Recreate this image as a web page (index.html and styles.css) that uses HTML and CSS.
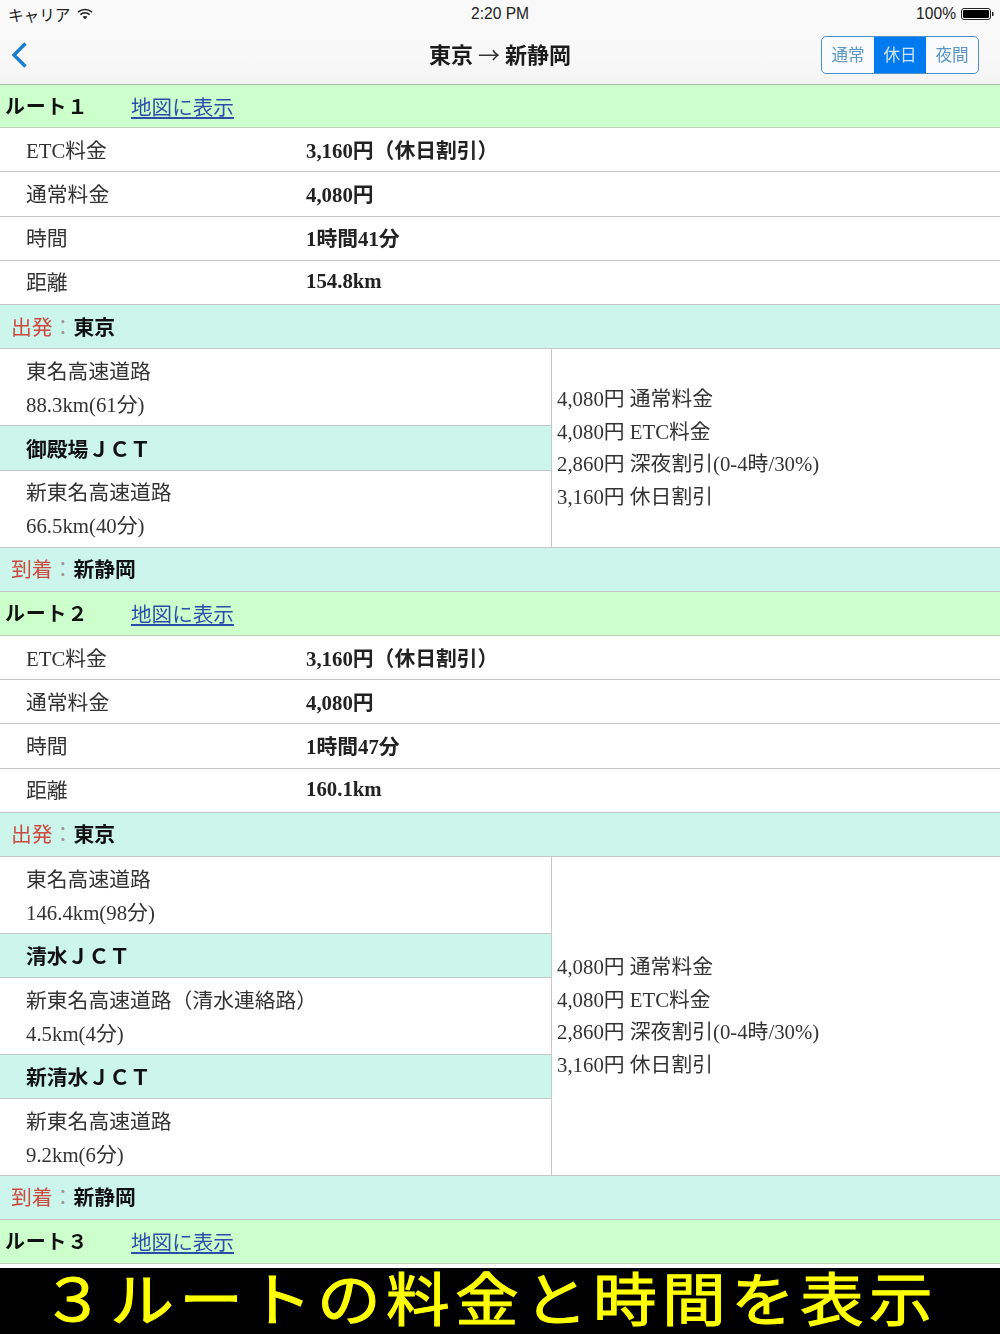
FILE: index.html
```html
<!DOCTYPE html>
<html lang="ja">
<head>
<meta charset="utf-8">
<title>ルート</title>
<link rel="stylesheet" href="styles.css">
</head>
<body>
<div class="app">
  <header class="top">
    <div class="status">
      <div class="status-left"><span>キャリア</span>
        <svg class="wifi" width="16" height="12" viewBox="0 0 16 12"><path d="M1 4.2C5 .6 11 .6 15 4.2" fill="none" stroke="#222" stroke-width="1.6"/><path d="M3.4 6.6c2.7-2.3 6.5-2.3 9.2 0" fill="none" stroke="#222" stroke-width="1.6"/><path d="M5.6 8.7 8 11.2l2.4-2.5c-1.4-1-3.4-1-4.8 0z" fill="#222"/></svg>
      </div>
      <div class="status-time">2:20 PM</div>
      <div class="status-right"><span>100%</span>
        <svg width="33" height="14" viewBox="0 0 33 14"><rect x=".5" y="1.5" width="29" height="11" rx="2.5" fill="none" stroke="#222"/><rect x="2" y="3" width="26" height="8" rx="1.2" fill="#000"/><path d="M31 5h.6a1 1 0 0 1 1 1v2a1 1 0 0 1-1 1H31z" fill="#222"/></svg>
      </div>
    </div>
    <nav class="nav">
      <svg class="back" width="18" height="28" viewBox="0 0 18 28"><path d="M15.5 2.5 4 14l11.5 11.5" fill="none" stroke="#1a7ccf" stroke-width="3.4"/></svg>
      <h1 class="title">東京 <span class="arrow">→</span> 新静岡</h1>
      <div class="seg"><span class="seg-item">通常</span><span class="seg-item seg-on">休日</span><span class="seg-item">夜間</span></div>
    </nav>
  </header>

  <section class="route route-first">
    <div class="row head"><span class="head-name">ルート１</span><a class="map" href="#">地図に表示</a></div>
    <div class="row info"><span class="k">ETC料金</span><b class="v">3,160円（休日割引）</b></div>
    <div class="row info"><span class="k">通常料金</span><b class="v">4,080円</b></div>
    <div class="row info"><span class="k">時間</span><b class="v">1時間41分</b></div>
    <div class="row info"><span class="k">距離</span><b class="v">154.8km</b></div>
    <div class="row stop"><span class="red">出発</span><span class="colon">：</span><b>東京</b></div>
    <div class="split split-short">
      <div class="legs">
        <div class="leg">東名高速道路<br>88.3km(61分)</div>
        <div class="row jct">御殿場ＪＣＴ</div>
        <div class="leg">新東名高速道路<br>66.5km(40分)</div>
      </div>
      <div class="fees">4,080円 通常料金<br>4,080円 ETC料金<br>2,860円 深夜割引(0-4時/30%)<br>3,160円 休日割引</div>
    </div>
    <div class="row stop"><span class="red">到着</span><span class="colon">：</span><b>新静岡</b></div>
  </section>

  <section class="route">
    <div class="row head"><span class="head-name">ルート２</span><a class="map" href="#">地図に表示</a></div>
    <div class="row info"><span class="k">ETC料金</span><b class="v">3,160円（休日割引）</b></div>
    <div class="row info"><span class="k">通常料金</span><b class="v">4,080円</b></div>
    <div class="row info"><span class="k">時間</span><b class="v">1時間47分</b></div>
    <div class="row info"><span class="k">距離</span><b class="v">160.1km</b></div>
    <div class="row stop"><span class="red">出発</span><span class="colon">：</span><b>東京</b></div>
    <div class="split split-long">
      <div class="legs">
        <div class="leg">東名高速道路<br>146.4km(98分)</div>
        <div class="row jct">清水ＪＣＴ</div>
        <div class="leg">新東名高速道路（清水連絡路）<br>4.5km(4分)</div>
        <div class="row jct">新清水ＪＣＴ</div>
        <div class="leg">新東名高速道路<br>9.2km(6分)</div>
      </div>
      <div class="fees">4,080円 通常料金<br>4,080円 ETC料金<br>2,860円 深夜割引(0-4時/30%)<br>3,160円 休日割引</div>
    </div>
    <div class="row stop"><span class="red">到着</span><span class="colon">：</span><b>新静岡</b></div>
  </section>

  <section class="route">
    <div class="row head"><span class="head-name">ルート３</span><a class="map" href="#">地図に表示</a></div>
  </section>
</div>
<footer class="caption"><span class="caption-text">３ルートの料金と時間を表示</span></footer>
</body>
</html>
```
FILE: styles.css
```css
* { box-sizing: border-box; }
html, body { margin: 0; padding: 0; }
body {
  width: 1000px;
  height: 1334px;
  overflow: hidden;
  background: #fff;
  color: #333;
  font-family: "Liberation Serif", "Noto Sans CJK JP", serif;
  font-size: 20.8px;
  display: flex;
  flex-direction: column;
}
.app { flex: 1; min-height: 0; overflow: hidden; filter: blur(.35px); }

.top {
  height: 85px;
  background: linear-gradient(#f9f9f9, #f8f8f8 70%, #f3f4f3);
  border-bottom: 1px solid #a9b8a9;
  color: #222;
  font-family: "Liberation Sans", "Noto Sans CJK JP", sans-serif;
}
.status {
  display: grid;
  grid-template-columns: 1fr auto 1fr;
  align-items: center;
  height: 27px;
  padding: 0 6px 0 8px;
  font-size: 15.6px;
}
.status-left { display: flex; align-items: center; gap: 7px; }
.status-right { display: flex; align-items: center; justify-content: flex-end; gap: 5px; }
.status-time { position: relative; left: -1px; }
.nav {
  position: relative;
  display: flex;
  align-items: center;
  justify-content: space-between;
  height: 56px;
  padding: 0 21px 0 10px;
}
.title {
  position: absolute;
  left: 0;
  right: 0;
  margin: 0;
  padding-bottom: 4px;
  text-align: center;
  font-family: "Noto Sans CJK JP", sans-serif;
  font-size: 22px;
  font-weight: 700;
  color: #1c1c1c;
}
.arrow { font-weight: 400; color: #333; }
.seg {
  position: relative;
  display: flex;
  height: 38px;
  width: 158px;
  border: 1.5px solid #4a8fc8;
  border-radius: 5px;
  overflow: hidden;
  background: #f9fbfc;
}
.seg-item {
  flex: 1;
  display: flex;
  align-items: center;
  justify-content: center;
  padding-bottom: 3px;
  font-size: 16.6px;
  color: #5b95c8;
}
.seg-on { background: #007aee; color: #cfe6fb; }

.row {
  display: flex;
  align-items: center;
  height: 44.2px;
  padding-bottom: 2px;
  border-bottom: 1px solid #c6c6c6;
}
.head {
  background: #ccffcc;
  padding-left: 5px;
  border-bottom-color: #bcd0bc;
  color: #111;
  font-family: "Liberation Sans", "Noto Sans CJK JP", sans-serif;
}
.route-first .head { height: 43.2px; padding-bottom: 1px; }
.head-name { width: 126px; font-weight: 700; font-size: 20px; letter-spacing: .8px; }
.map { color: #2a4fa8; text-decoration: underline; font-size: 20.6px; }
.info { padding-left: 26px; }
.k { width: 280px; }
.v { color: #222; }
.stop { background: #ccf5ec; padding-left: 11px; color: #111; }
.red { color: #cc4a3e; }
.colon { color: #9a9a9a; }
.split {
  display: grid;
  grid-template-columns: 552px 1fr;
  border-bottom: 1px solid #c6c6c6;
}
.split-short { height: 198.6px; }
.split-long { height: 318.8px; }
.legs {
  display: flex;
  flex-direction: column;
  border-right: 1px solid #c6c6c6;
}
.leg {
  flex: 1;
  padding: 5.5px 0 0 26px;
  line-height: 33px;
  border-bottom: 1px solid #c6c6c6;
}
.leg:last-child { border-bottom: 0; }
.jct { flex: none; background: #ccf5ec; padding: 0 0 0 26px; color: #111; font-weight: 700; }
.fees { align-self: center; padding: 1px 0 0 5px; line-height: 32.8px; }
.caption {
  flex: none;
  height: 66.5px;
  background: #000;
  color: #ff0;
  text-align: center;
  overflow: hidden;
  font-family: "Liberation Sans", "Noto Sans CJK JP", sans-serif;
  font-size: 58px;
  line-height: 66px;
  letter-spacing: 4.7px;
  white-space: nowrap;
  -webkit-text-stroke: 1px #ff0;
  filter: blur(.35px);
}
.caption-text {
  display: inline-block;
  transform: translateX(-10px) scaleX(1.1);
}
```
